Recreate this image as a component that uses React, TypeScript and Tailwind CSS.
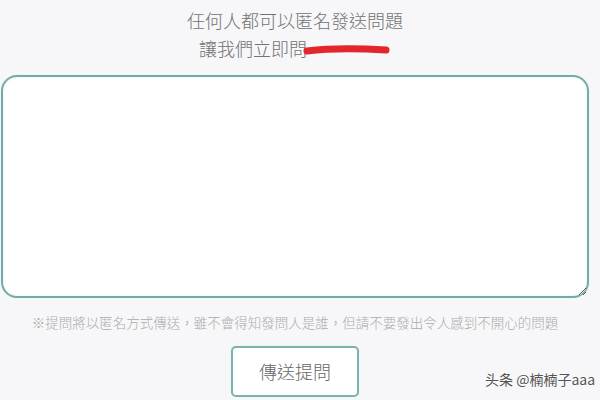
export default function App() {
  return (
    <div
      className="relative w-[600px] h-[400px] overflow-hidden bg-[#f7f7f9] text-[#666]"
      style={{ fontFamily: '"Noto Sans CJK TC", "Noto Sans", sans-serif' }}
    >
      <div className="ml-px w-[588px] flex flex-col items-center pt-[6px]">
        <p className="text-[18px] leading-[28px] font-light text-[#727272]">任何人都可以匿名發送問題</p>
        <p className="relative text-[18px] leading-[28px] font-light text-[#727272] pr-[84px]">
          讓我們立即問
          {/* red scribble over the hidden name */}
          <svg className="absolute right-0 top-[10px]" width="88" height="12" viewBox="0 0 88 12">
            <path
              d="M4 7 C 20 5, 50 4, 83 6"
              stroke="#e3262b"
              strokeWidth="7"
              strokeLinecap="round"
              fill="none"
            />
          </svg>
        </p>

        <textarea className="mt-[13px] w-[588px] h-[223px] rounded-[16px] border-2 border-[#78a9a7] bg-white shadow-[inset_0_0_3px_#d6f2f2,0_0_2px_#d6f2f2] outline-none" />

        <p className="mt-[14px] text-[13.5px] leading-[20px] font-light text-[#ababab]">
          ※提問將以匿名方式傳送，雖不會得知發問人是誰，但請不要發出令人感到不開心的問題
        </p>

        <button className="mt-[14px] w-[128px] h-[51px] rounded-[5px] border-2 border-[#7fb2ae] bg-white text-[18px] font-light text-[#666] shadow-[0_0_2px_#d6f2f2]">
          傳送提問
        </button>
      </div>

      <div className="absolute left-[485px] top-[369px] whitespace-nowrap text-[14px] leading-[20px] text-[#555] [text-shadow:0_0_2px_#fff]">
        头条 @楠楠子aaa
      </div>
    </div>
  );
}
